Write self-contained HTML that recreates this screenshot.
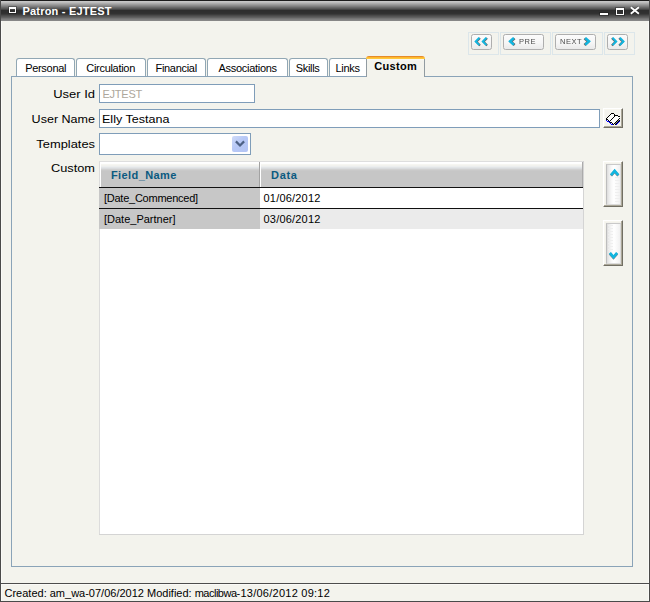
<!DOCTYPE html>
<html>
<head>
<meta charset="utf-8">
<title>Patron - EJTEST</title>
<style>
*{box-sizing:border-box;margin:0;padding:0}
html,body{width:650px;height:602px;overflow:hidden;background:#f3f3ed}
body{font-family:"Liberation Sans",sans-serif;font-size:11px;color:#000;position:relative}
.abs{position:absolute}
.t{position:absolute;white-space:nowrap;line-height:14px;height:14px}
/* window frame */
#win{position:absolute;left:0;top:0;width:650px;height:602px;background:#f3f3ed}
#bl{left:0;top:0;width:1px;height:602px;background:#4a4a4a}
#br{left:649px;top:0;width:1px;height:602px;background:#4a4a4a}
#bb{left:0;top:601px;width:650px;height:1px;background:#4a4a4a}
#title{left:0;top:0;width:650px;height:21px;background:linear-gradient(to bottom,#1c1c1c 0px 1px,#c6c6c6 1px 2px,#bcbcbc 2px 3px,#acacac 3px 4px,#9c9c9c 4px 5px,#8c8c8c 5px 6px,#7c7c7c 6px 7px,#6a6a6a 7px 8px,#5a5a5a 8px 9px,#464646 9px 10px,#2e2e2e 10px 11px,#2f2f2f 11px 12px,#303030 12px 13px,#323232 13px 14px,#3c3c3c 14px 15px,#4a4a4a 15px 16px,#565656 16px 17px,#626262 17px 18px,#747474 18px 19px,#808080 19px 20px,#868686 20px 21px)}
#ttext{left:22.5px;top:4px;color:#fff;font-weight:bold;font-size:11px;letter-spacing:0.2px}
/* tabs */
.tab{position:absolute;top:58px;height:18px;background:#fff;border:1px solid #91a7b4;border-bottom:none;border-radius:3px 3px 0 0}
.tab span{position:absolute;left:0;right:0;top:2px;text-align:center;white-space:nowrap;line-height:14px;letter-spacing:-0.3px;padding-left:0.3px}
#tabsel{top:59px;height:18px;background:linear-gradient(to bottom,#fafaf8 0px,#f6f6f2 1px,#f3f3ed 2px);border:none;border-left:1px solid #919ba1;border-right:1px solid #919ba1;border-radius:0;z-index:2}
#otop{left:366px;top:56px;width:59px;height:3px;z-index:3;border-radius:3px 3px 0 0;background:linear-gradient(to bottom,#e68b2c 0px,#e68b2c 1px,#fdb82f 1px,#fdb82f 2px,#ffc83d 2px,#ffc83d 3px)}
#tabsel span{font-weight:bold;top:0px;letter-spacing:0.3px}
#panel{left:11px;top:76px;width:622px;height:491px;border:1px solid #8aa3b8;background:#f3f3ed}
/* inputs */
.inp{position:absolute;background:#fff;border:1px solid #7f9db9}
.lbl{position:absolute;white-space:nowrap;line-height:14px;text-align:right;width:90px;left:4.6px;font-size:11px;transform:scaleX(1.14);transform-origin:100% 50%}
/* grid */
#grid{left:99px;top:161px;width:485px;height:374px;background:#fff;border-right:1px solid #d4d4d4;border-bottom:1px solid #d4d4d4}
#ghead{left:0;top:0;width:484px;height:26px;background:linear-gradient(to bottom,#dedede 0px 1px,#ffffff 1px 2px,#fefefe 2px 3px,#f6f6f2 3px 4px,#f2f2ee 4px 5px,#eceeee 5px 6px,#e2e5e7 6px 7px,#dadcde 7px 8px,#d0d0d0 8px 9px,#c9c9c9 9px 10px,#c6c6c6 10px 26px)}
.gh{position:absolute;top:7px;color:#0b5a80;font-weight:bold;line-height:14px;white-space:nowrap}
.hl{position:absolute;left:0;width:484px;height:1px;background:#111}
.c1{position:absolute;left:0;width:161px;height:20px;background:#c7c7c7}
.c2{position:absolute;left:161px;width:323px;height:20px}
.ct{position:absolute;left:5px;top:3px;line-height:14px;white-space:nowrap}

/* nav */
.cell{position:absolute;top:32px;height:23px;border:1px solid #dce6ea}
.nbtn{position:absolute;top:34px;height:16px;border:1px solid #aeaeae;border-radius:2.5px;background:linear-gradient(to bottom,#fbfbfb 0%,#f6f6f6 55%,#eaeaea 100%)}
.nbtn svg{position:absolute;left:0;top:0}
.ntx{position:absolute;top:3px;font-size:7.5px;line-height:8px;color:#4c4c4c;letter-spacing:0.5px;white-space:nowrap;will-change:transform}
/* 3d buttons */
.b3d{position:absolute;background:#f3f2ec;border:1px solid;border-color:#ffffff #716f64 #716f64 #ffffff;box-shadow:inset -1px -1px 0 #aca899, inset 1px 1px 0 #f8f7f0}
.sbi{position:absolute;left:2px;top:2px;width:15px;height:41px;border:1px solid #dcdcdc;border-left-color:#bdbdbd;border-top-color:#c9c9c9;background:linear-gradient(to right,#dcdcdc 0px,#ececec 2px,#fafafa 5px,#ffffff 7px,#f6f6f6 11px,#eeeeee 14px)}
.dots{position:absolute;background:repeating-linear-gradient(to bottom,#efefef 0px,#efefef 1px,rgba(255,255,255,0) 1px,rgba(255,255,255,0) 3px)}
/* status */
#sline{left:1px;top:583px;width:648px;height:1px;background:#4c4c4c;box-shadow:0 1px 0 #fafaf7}
#stext{left:4.5px;top:586px}
</style>
</head>
<body>
<div id="win">
 <div id="title" class="abs"></div>
 <div class="abs" style="left:9px;top:7px;width:7px;height:6px;border:1px solid #fff;border-top-width:2px;box-shadow:0 0 0 1px rgba(20,20,20,0.3)"></div>
 <div id="ttext" class="t">Patron - EJTEST</div>
 <!-- window controls -->
 <div class="abs" style="left:600px;top:13px;width:8px;height:2px;background:#fff;box-shadow:0 0 0 1px rgba(20,20,20,0.35)"></div>
 <div class="abs" style="left:616px;top:8px;width:8px;height:7px;border:1px solid #fff;border-top-width:2px;box-shadow:0 0 0 1px rgba(20,20,20,0.35)"></div>
 <svg class="abs" style="left:629px;top:6px" width="12" height="10" viewBox="0 0 12 10"><path d="M1.8 1.3 L9.9 7.7 M9.9 1.3 L1.8 7.7" stroke="#222" stroke-width="3" fill="none" opacity="0.35"/><path d="M1.8 1.3 L9.9 7.7 M9.9 1.3 L1.8 7.7" stroke="#fff" stroke-width="1.8" fill="none"/></svg>

 <div class="abs" style="left:1px;top:21px;width:1px;height:580px;background:#fafaf7"></div><div class="abs" style="left:648px;top:21px;width:1px;height:580px;background:#fafaf7"></div><div id="bl" class="abs"></div><div id="br" class="abs"></div><div id="bb" class="abs"></div>

 <!-- nav buttons -->
 <div class="cell" style="left:468px;width:31px"></div>
 <div class="cell" style="left:500px;width:51px"></div>
 <div class="cell" style="left:552px;width:51px"></div>
 <div class="cell" style="left:604px;width:31px"></div>
 <div class="nbtn" style="left:471px;width:21px"><svg width="19" height="14" viewBox="0 0 19 14"><path d="M7.35 2.8 L3.7 6.45 L7.35 10.1 M14.45 2.8 L10.8 6.45 L14.45 10.1" fill="none" stroke="#3d3230" stroke-width="2" opacity="0.75" transform="translate(0.7,0.35)"/><path d="M7.35 2.8 L3.7 6.45 L7.35 10.1 M14.45 2.8 L10.8 6.45 L14.45 10.1" fill="none" stroke="#12b6e0" stroke-width="2"/></svg></div>
 <div class="nbtn" style="left:503px;width:41px"><svg width="39" height="14" viewBox="0 0 39 14"><path d="M9.9 3.0 L6.1 6.35 L9.9 9.7" fill="none" stroke="#3d3230" stroke-width="2.5" opacity="0.75" transform="translate(0.7,0.35)"/><path d="M9.9 3.0 L6.1 6.35 L9.9 9.7" fill="none" stroke="#12b6e0" stroke-width="2.5"/></svg><span class="ntx" style="left:15px">PRE</span></div>
 <div class="nbtn" style="left:555px;width:41px"><svg width="39" height="14" viewBox="0 0 39 14"><path d="M29.2 3.0 L33.0 6.35 L29.2 9.7" fill="none" stroke="#3d3230" stroke-width="2.5" opacity="0.75" transform="translate(-0.7,0.35)"/><path d="M29.2 3.0 L33.0 6.35 L29.2 9.7" fill="none" stroke="#12b6e0" stroke-width="2.5"/></svg><span class="ntx" style="left:4px">NEXT</span></div>
 <div class="nbtn" style="left:607px;width:21px"><svg width="19" height="14" viewBox="0 0 19 14"><path d="M4.54 2.8 L8.19 6.45 L4.54 10.1 M11.84 2.8 L15.49 6.45 L11.84 10.1" fill="none" stroke="#3d3230" stroke-width="2" opacity="0.75" transform="translate(-0.7,0.35)"/><path d="M4.54 2.8 L8.19 6.45 L4.54 10.1 M11.84 2.8 L15.49 6.45 L11.84 10.1" fill="none" stroke="#12b6e0" stroke-width="2"/></svg></div>

 <!-- panel -->
 <div id="panel" class="abs"></div>

 <!-- tabs -->
 <div class="tab" style="left:16px;width:59px"><span>Personal</span></div>
 <div class="tab" style="left:76px;width:70px"><span style="right:1px">Circulation</span></div>
 <div class="tab" style="left:147px;width:59px"><span style="right:1px">Financial</span></div>
 <div class="tab" style="left:207px;width:81px"><span>Associations</span></div>
 <div class="tab" style="left:289px;width:39px"><span style="right:2px">Skills</span></div>
 <div class="tab" style="left:329px;width:38px;border-top-right-radius:0"><span style="right:1px">Links</span></div>
 <div class="tab" id="tabsel" style="left:366px;width:59px"><span>Custom</span></div>
 <div id="otop" class="abs"></div>

 <!-- form -->
 <div class="lbl" style="top:87px;transform:scaleX(1.18)">User Id</div>
 <div class="inp" style="left:99px;top:84px;width:156px;height:19px"></div>
 <div class="t" style="left:102.4px;top:87px;color:#ada79c;letter-spacing:-0.2px">EJTEST</div>

 <div class="lbl" style="top:112px">User Name</div>
 <div class="inp" style="left:99px;top:109px;width:501px;height:19px"></div>
 <div class="t" style="left:102.4px;top:112px;transform:scaleX(1.14);transform-origin:0 50%">Elly Testana</div>

 <div class="lbl" style="top:137px;transform:scaleX(1.17)">Templates</div>
 <div class="inp" style="left:99px;top:133px;width:152px;height:22px"></div>
 <div class="abs" style="left:232px;top:136px;width:16px;height:16px;background:linear-gradient(135deg,#cfdbf9 0%,#b7c8f6 45%,#b3c4f4 100%);border-radius:2px"><svg class="abs" style="left:0;top:0" width="16" height="16" viewBox="0 0 16 16"><path d="M3.9 5.4 L8 9.5 L12.1 5.4" fill="none" stroke="#4d6185" stroke-width="2.2"/></svg></div>

 <div class="lbl" style="top:161px;transform:scaleX(1.16)">Custom</div>

 <!-- grid -->
 <div id="grid" class="abs">
  <div id="ghead" class="abs"></div>
  <div class="gh" style="left:12px;letter-spacing:0.4px">Field_Name</div>
  <div class="gh" style="left:172px;letter-spacing:0.7px">Data</div>
  <div class="abs" style="left:160px;top:1px;width:1px;height:25px;background:#a2a2a2"></div>
  <div class="abs" style="left:483px;top:1px;width:1px;height:25px;background:#ababab"></div>
  <div class="abs" style="left:161px;top:1px;width:1px;height:25px;background:#fff"></div>
  <div class="abs" style="left:0;top:1px;width:1px;height:25px;background:#dcdcdc"></div><div class="abs" style="left:1px;top:1px;width:1px;height:25px;background:#fff"></div>
  <div class="abs" style="left:0;top:68px;width:1px;height:305px;background:#dcdcdc"></div>
  <div class="hl" style="top:26px"></div>
  <div class="c1" style="top:27px"><div class="ct" style="letter-spacing:-0.25px">[Date_Commenced]</div></div>
  <div class="c2" style="top:27px;background:#fff"><div class="ct" style="left:3.5px;letter-spacing:0.2px">01/06/2012</div></div>
  <div class="hl" style="top:47px"></div>
  <div class="c1" style="top:48px"><div class="ct">[Date_Partner]</div></div>
  <div class="c2" style="top:48px;background:#ebebeb"><div class="ct" style="left:3.5px;letter-spacing:0.2px">03/06/2012</div></div>
 </div>

 <!-- eraser -->
 <div class="b3d" style="left:603px;top:108px;width:20px;height:20px"><svg class="abs" style="left:0;top:0" width="18" height="18" viewBox="0 0 18 18" shape-rendering="crispEdges"><path d="M2.5 9.5 L7.5 4.5 L10 4.5 L11 6 L15.5 7.5 L15.5 9.5 L10 15 Z" fill="#fdfdfb"/><rect x="7" y="4" width="1" height="1" fill="#000"/><rect x="8" y="4" width="1" height="1" fill="#000"/><rect x="9" y="4" width="1" height="1" fill="#000"/><rect x="6" y="5" width="1" height="1" fill="#000"/><rect x="5" y="6" width="1" height="1" fill="#000"/><rect x="4" y="7" width="1" height="1" fill="#000"/><rect x="3" y="8" width="1" height="1" fill="#000"/><rect x="2" y="9" width="1" height="1" fill="#000"/><rect x="2" y="10" width="1" height="1" fill="#000"/><rect x="10" y="5" width="1" height="1" fill="#000"/><rect x="10" y="6" width="1" height="1" fill="#000"/><rect x="11" y="6" width="1" height="1" fill="#000"/><rect x="12" y="6" width="1" height="1" fill="#000"/><rect x="13" y="6" width="1" height="1" fill="#000"/><rect x="14" y="7" width="1" height="1" fill="#000"/><rect x="15" y="7" width="1" height="1" fill="#000"/><rect x="10" y="7" width="1" height="1" fill="#000"/><rect x="9" y="8" width="1" height="1" fill="#000"/><rect x="8" y="9" width="1" height="1" fill="#000"/><rect x="7" y="10" width="1" height="1" fill="#000"/><rect x="6" y="11" width="1" height="1" fill="#000"/><rect x="3" y="10" width="1" height="1" fill="#000"/><rect x="4" y="11" width="1" height="1" fill="#000"/><rect x="5" y="12" width="1" height="1" fill="#000"/><rect x="6" y="13" width="1" height="1" fill="#000"/><rect x="7" y="13" width="1" height="1" fill="#000"/><rect x="8" y="14" width="1" height="1" fill="#000"/><rect x="9" y="15" width="1" height="1" fill="#000"/><rect x="15" y="9" width="1" height="1" fill="#000"/><rect x="14" y="10" width="1" height="1" fill="#000"/><rect x="13" y="11" width="1" height="1" fill="#000"/><rect x="12" y="12" width="1" height="1" fill="#000"/><rect x="11" y="13" width="1" height="1" fill="#000"/><rect x="10" y="14" width="1" height="1" fill="#000"/><rect x="15" y="11" width="1" height="1" fill="#000"/><rect x="14" y="12" width="1" height="1" fill="#000"/><rect x="13" y="13" width="1" height="1" fill="#000"/><rect x="12" y="14" width="1" height="1" fill="#000"/><rect x="11" y="15" width="1" height="1" fill="#000"/><rect x="2" y="11" width="1" height="1" fill="#0000ff"/><rect x="3" y="12" width="1" height="1" fill="#0000ff"/><rect x="4" y="12" width="1" height="1" fill="#0000ff"/><rect x="5" y="13" width="1" height="1" fill="#0000ff"/><rect x="6" y="14" width="1" height="1" fill="#0000ff"/><rect x="7" y="15" width="1" height="1" fill="#0000ff"/><rect x="8" y="15" width="1" height="1" fill="#0000ff"/><rect x="15" y="12" width="1" height="1" fill="#0000ff"/><rect x="14" y="13" width="1" height="1" fill="#0000ff"/><rect x="13" y="14" width="1" height="1" fill="#0000ff"/><rect x="12" y="15" width="1" height="1" fill="#0000ff"/><rect x="14" y="11" width="1" height="1" fill="#000" opacity="0.45"/><rect x="13" y="12" width="1" height="1" fill="#000" opacity="0.45"/><rect x="12" y="13" width="1" height="1" fill="#000" opacity="0.45"/><rect x="11" y="14" width="1" height="1" fill="#000" opacity="0.45"/></svg></div>
 <!-- scroll up/down -->
 <div class="b3d" style="left:603px;top:161px;width:20px;height:46px"><div class="sbi"></div><div class="dots" style="left:11px;top:15px;width:5px;height:27px"></div>
  <svg class="abs" style="left:5px;top:6px" width="12" height="10" viewBox="0 0 12 10"><path d="M2.0 7.1 L5.65 2.9 L9.3 7.1" fill="none" stroke="#3d3230" stroke-width="2.7" opacity="0.6" transform="translate(0,0.6)"/><path d="M2.0 7.1 L5.65 2.9 L9.3 7.1" fill="none" stroke="#12b6e0" stroke-width="2.7"/></svg></div>
 <div class="b3d" style="left:603px;top:220px;width:20px;height:46px"><div class="sbi"></div><div class="dots" style="left:4px;top:4px;width:5px;height:27px"></div>
  <svg class="abs" style="left:4px;top:30px" width="12" height="10" viewBox="0 0 12 10"><path d="M1.9 1.9 L5.5 6.1 L9.1 1.9" fill="none" stroke="#3d3230" stroke-width="2.7" opacity="0.6" transform="translate(0,0.6)"/><path d="M1.9 1.9 L5.5 6.1 L9.1 1.9" fill="none" stroke="#12b6e0" stroke-width="2.7"/></svg></div>

 <!-- status -->
 <div id="sline" class="abs"></div>
 <div id="stext" class="t">Created: am_wa-07/06/2012 Modified: <span style="letter-spacing:-0.5px">maclibwa</span><span style="letter-spacing:0.25px">-13/06/2012 09:12</span></div>
</div>
</body>
</html>
